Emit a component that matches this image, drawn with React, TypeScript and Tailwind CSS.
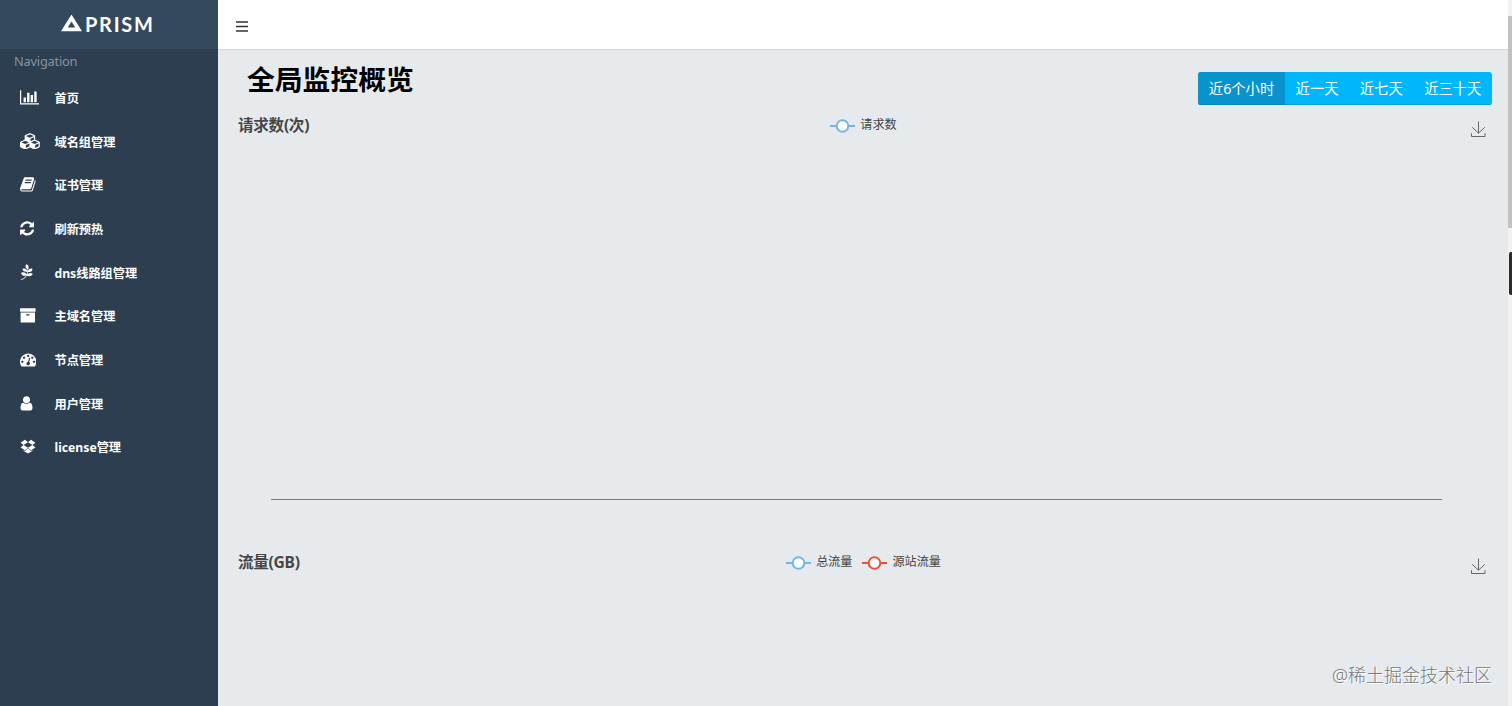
import clsx from "clsx";
import { FaPagelines } from "react-icons/fa";

type NavItem = {
  label: string;
  width: number;
  viewBox?: string;
  path?: string;
};

const navItems: NavItem[] = [
  {
    label: "首页",
    width: 19,
    viewBox: "0 0 2048 1792",
    path: "M640 896v512h-256v-512h256zm384-512v1024h-256v-1024h256zm1024 1152v128h-2048v-1536h128v1408h1920zm-640-896v768h-256v-768h256zm384-384v1152h-256v-1152h256z",
  },
  {
    label: "域名组管理",
    width: 21,
    viewBox: "0 0 2304 1792",
    path: "M640 1632l384-192v-314l-384 164v342zm-64-454l404-173-404-173-404 173zm1088 454l384-192v-314l-384 164v342zm-64-454l404-173-404-173-404 173zm-448-293l384-165v-266l-384 164v267zm-64-379l441-189-441-189-441 189zm1088 518v416q0 36-19 67t-52 47l-448 224q-25 14-57 14t-57-14l-448-224q-5-2-7-4-2 2-7 4l-448 224q-25 14-57 14t-57-14l-448-224q-33-16-52-47t-19-67v-416q0-38 21.5-70t56.5-48l434-186v-400q0-38 21.5-70t56.5-48l448-192q23-10 50-10t50 10l448 192q35 16 56.5 48t21.5 70v400l434 186q36 16 57 48t21 70z",
  },
  {
    label: "证书管理",
    width: 15.6,
    viewBox: "64 0 1664 1792",
    path: "M1703 478q40 57 18 129l-275 906q-19 64-76.5 107.5t-122.5 43.5h-923q-77 0-148.5-53.5t-99.5-131.5q-24-67-2-127 0-4 3-27t4-37q1-8-3-21.5t-3-19.5q2-11 8-21t16.5-23.5 16.5-23.5q23-38 45-91.5t30-91.5q3-10 .5-30t-.5-28q3-11 17-28t17-23q21-36 42-92t25-90q1-9-2.5-32t.5-28q4-13 22-30.5t22-22.5q19-26 42.5-84.5t27.5-96.5q1-8-3-25.5t-2-26.5q2-8 9-18t18-23 17-21q8-12 16.5-30.5t15-35 16-36 19.5-32 26.5-23.5 36-11.5 47.5 5.5l-1 3q38-9 51-9h761q74 0 114 56t18 130l-274 906q-36 119-71.5 153.5t-128.5 34.5h-869q-27 0-38 15-11 16-1 43 24 70 144 70h923q29 0 56-15.5t35-41.5l300-987q7-22 5-57 38 15 59 43zm-1064 2q-4 13 2 22.5t20 9.5h608q13 0 25.5-9.5t16.5-22.5l21-64q4-13-2-22.5t-20-9.5h-608q-13 0-25.5 9.5t-16.5 22.5zm-83 256q-4 13 2 22.5t20 9.5h608q13 0 25.5-9.5t16.5-22.5l21-64q4-13-2-22.5t-20-9.5h-608q-13 0-25.5 9.5t-16.5 22.5z",
  },
  {
    label: "刷新预热",
    width: 14.4,
    viewBox: "128 0 1536 1792",
    path: "M1639 1056q0 5-1 7-64 268-268 434.5t-478 166.5q-146 0-282.5-55t-243.5-157l-129 129q-19 19-45 19t-45-19-19-45v-448q0-26 19-45t45-19h448q26 0 45 19t19 45-19 45l-137 137q71 66 161 102t187 36q134 0 250-65t186-179q11-17 53-117 8-23 30-23h192q13 0 22.5 9.5t9.5 22.5zm25-800v448q0 26-19 45t-45 19h-448q-26 0-45-19t-19-45 19-45l138-138q-148-137-349-137-134 0-250 65t-186 179q-11 17-53 117-8 23-30 23h-199q-13 0-22.5-9.5t-9.5-22.5v-7q65-268 270-434.5t480-166.5q146 0 284 55.5t245 156.5l130-129q19-19 45-19t45 19 19 45z",
  },
  { label: "dns线路组管理", width: 13.5 },
  {
    label: "主域名管理",
    width: 16.8,
    viewBox: "64 0 1792 1792",
    path: "M1088 832q0-26-19-45t-45-19h-256q-26 0-45 19t-19 45 19 45 45 19h256q26 0 45-19t19-45zm576-192v960q0 26-19 45t-45 19h-1408q-26 0-45-19t-19-45v-960q0-26 19-45t45-19h1408q26 0 45 19t19 45zm64-448v256q0 26-19 45t-45 19h-1536q-26 0-45-19t-19-45v-256q0-26 19-45t45-19h1536q26 0 45 19t19 45z",
  },
  {
    label: "节点管理",
    width: 16.4,
    viewBox: "0 0 1792 1792",
    path: "M384 1152q0-53-37.5-90.5t-90.5-37.5-90.5 37.5-37.5 90.5 37.5 90.5 90.5 37.5 90.5-37.5 37.5-90.5zm192-448q0-53-37.5-90.5t-90.5-37.5-90.5 37.5-37.5 90.5 37.5 90.5 90.5 37.5 90.5-37.5 37.5-90.5zm428 481l101-382q6-26-7.5-48.5t-38.5-29.5-48 6.5-30 39.5l-101 382q-60 5-107 43.5t-63 98.5q-20 77 20 146t117 89 146-20 89-117q16-60-6-117t-72-91zm660-33q0-53-37.5-90.5t-90.5-37.5-90.5 37.5-37.5 90.5 37.5 90.5 90.5 37.5 90.5-37.5 37.5-90.5zm-640-640q0-53-37.5-90.5t-90.5-37.5-90.5 37.5-37.5 90.5 37.5 90.5 90.5 37.5 90.5-37.5 37.5-90.5zm448 192q0-53-37.5-90.5t-90.5-37.5-90.5 37.5-37.5 90.5 37.5 90.5 90.5 37.5 90.5-37.5 37.5-90.5zm320 448q0 261-141 483-19 29-54 29h-1402q-35 0-54-29-141-221-141-483 0-182 71-348t191-286 286-191 348-71 348 71 286 191 191 286 71 348z",
  },
  {
    label: "用户管理",
    width: 13,
    viewBox: "256 0 1280 1792",
    path: "M1536 1399q0 109-62.5 187t-150.5 78h-854q-88 0-150.5-78t-62.5-187q0-85 8.5-160.5t31.5-152 58.5-131 94-89 134.5-34.5q131 128 313 128t313-128q76 0 134.5 34.5t94 89 58.5 131 31.5 152 8.5 160.5zm-256-887q0 159-112.5 271.5t-271.5 112.5-271.5-112.5-112.5-271.5 112.5-271.5 271.5-112.5 271.5 112.5 112.5 271.5z",
  },
  {
    label: "license管理",
    width: 16,
    viewBox: "0 0 1792 1792",
    path: "M554 160L896 445L402 749L64 479ZM1238 160L896 445L1390 749L1728 479ZM402 749L896 1054L554 1339L64 1020ZM1390 749L896 1054L1238 1339L1728 1020ZM896 1115L1239 1400L1386 1304V1412L896 1705L406 1412V1304L553 1400Z",
  },
];

const ranges = [
  { label: "近6个小时", active: true },
  { label: "近一天", active: false },
  { label: "近七天", active: false },
  { label: "近三十天", active: false },
];

function Sidebar() {
  return (
    <aside className="flex w-[218px] shrink-0 flex-col bg-[#2c3e50]">
      <div className="flex h-[50px] items-center border-b border-[#2b3d4f] bg-[#34495e] pb-[2px] pl-[61px] text-white">
        <svg width="21" height="17" viewBox="0 0 21 17" fill="none">
          <path
            d="M10.5 3L17.7 14.4H3.3Z"
            stroke="currentColor"
            strokeWidth="3.7"
          />
        </svg>
        <span className="ml-[3px] font-['Lato'] text-[20px] leading-none font-bold tracking-[1.7px]">
          PRISM
        </span>
      </div>
      <p className="mt-[1px] h-[20px] pl-[14px] text-[12.8px] leading-[20px] tracking-[-0.2px] text-[#8395a8]">
        Navigation
      </p>
      <nav className="mt-[6px]">
        {navItems.map(({ label, width, viewBox, path }) => (
          <a
            key={label}
            className="flex h-[43.7px] items-center pl-[20px] text-white"
          >
            <span className="flex w-[34.5px] pb-[3px]">
              {path ? (
                <svg
                  width={width}
                  height="16.8"
                  viewBox={viewBox}
                  fill="currentColor"
                >
                  <path d={path} />
                </svg>
              ) : (
                <FaPagelines style={{ width, height: 16 }} />
              )}
            </span>
            <span className="text-[12.2px] leading-[18px] font-bold whitespace-nowrap">
              {label}
            </span>
          </a>
        ))}
      </nav>
    </aside>
  );
}

function LegendItem({ label, color }: { label: string; color: string }) {
  return (
    <div className="flex items-center">
      <svg width="25" height="14" viewBox="0 0 25 14" className="mt-[2px]">
        <path d="M0 7H25" stroke={color} strokeWidth="2" />
        <circle
          cx="12.5"
          cy="7"
          r="5.8"
          fill="white"
          stroke={color}
          strokeWidth="2"
        />
      </svg>
      <span className="ml-[5px] text-[12.1px] leading-[16px] text-[#444]">
        {label}
      </span>
    </div>
  );
}

function Chart({
  title,
  legend,
}: {
  title: string;
  legend: { label: string; color: string }[];
}) {
  return (
    <section className="h-[437px] shrink-0">
      <div className="grid h-[28px] grid-cols-[1fr_auto_1fr] items-start pr-[26px] pl-[23px]">
        <h2 className="-ml-[3px] text-[15.6px] leading-[23px] font-bold tracking-[-0.3px] text-[#464646]">
          {title}
        </h2>
        <div className="flex gap-[10px] pt-[3px]">
          {legend.map((item) => (
            <LegendItem key={item.label} {...item} />
          ))}
        </div>
        <svg
          width="16"
          height="17"
          viewBox="0 0 16 17"
          fill="none"
          stroke="#666"
          className="mt-[7px] justify-self-end"
        >
          <path d="M8.5 .5V12M2.2 6.3L8.5 12.2L14.8 6.3M1.5 12.2V15.5H15V12.2" />
        </svg>
      </div>
      <div className="mr-[70px] ml-[53px] h-[358px] border-b border-[#777c7f]" />
    </section>
  );
}

export default function App() {
  return (
    <div className="relative flex h-[706px] w-[1512px] overflow-hidden bg-[#e6eaed] font-['Noto_Sans','Noto_Sans_CJK_SC',sans-serif]">
      <Sidebar />
      <div className="flex min-w-0 flex-1 flex-col">
        <header className="flex h-[50px] shrink-0 items-center border-b border-[#d5d8db] bg-white pt-[3px] pl-[18px]">
          <svg width="12" height="11" viewBox="0 0 12 11" stroke="#333">
            <path d="M0 1H12M0 5.5H12M0 10H12" strokeWidth="1.5" />
          </svg>
        </header>
        <div className="flex h-[64px] shrink-0 items-start justify-between pr-[20px] pl-[29px]">
          <h1 className="pt-[10px] text-[27.8px] leading-[39px] font-bold text-black">
            全局监控概览
          </h1>
          <div className="mt-[22px] flex h-[33px] overflow-hidden rounded-[3px] bg-[#00b7fb] text-[14.3px] text-white">
            {ranges.map(({ label, active }) => (
              <button
                key={label}
                className={clsx(
                  "border-b px-[10.7px] leading-[31px]",
                  active
                    ? "border-[#0785b5] bg-[#0993cc]"
                    : "border-[#0a9ed6]",
                )}
              >
                {label}
              </button>
            ))}
          </div>
        </div>
        <Chart
          title="请求数(次)"
          legend={[{ label: "请求数", color: "#70b7e8" }]}
        />
        <Chart
          title="流量(GB)"
          legend={[
            { label: "总流量", color: "#70b7e8" },
            { label: "源站流量", color: "#e9513f" },
          ]}
        />
      </div>
      <div className="absolute top-0 right-0 h-full w-[4px] bg-[#f1f1f1]">
        <div className="mt-[16px] h-[212px] bg-[#c1c1c1]" />
      </div>
      <div className="absolute top-[252px] right-0 h-[43px] w-[3px] rounded-l-[2px] bg-[#2b2b2b]" />
      <p className="absolute right-[20px] bottom-[18px] text-[18px] leading-[26px] font-light text-[#777] [text-shadow:1px_1px_0_#fff]">
        @稀土掘金技术社区
      </p>
    </div>
  );
}
